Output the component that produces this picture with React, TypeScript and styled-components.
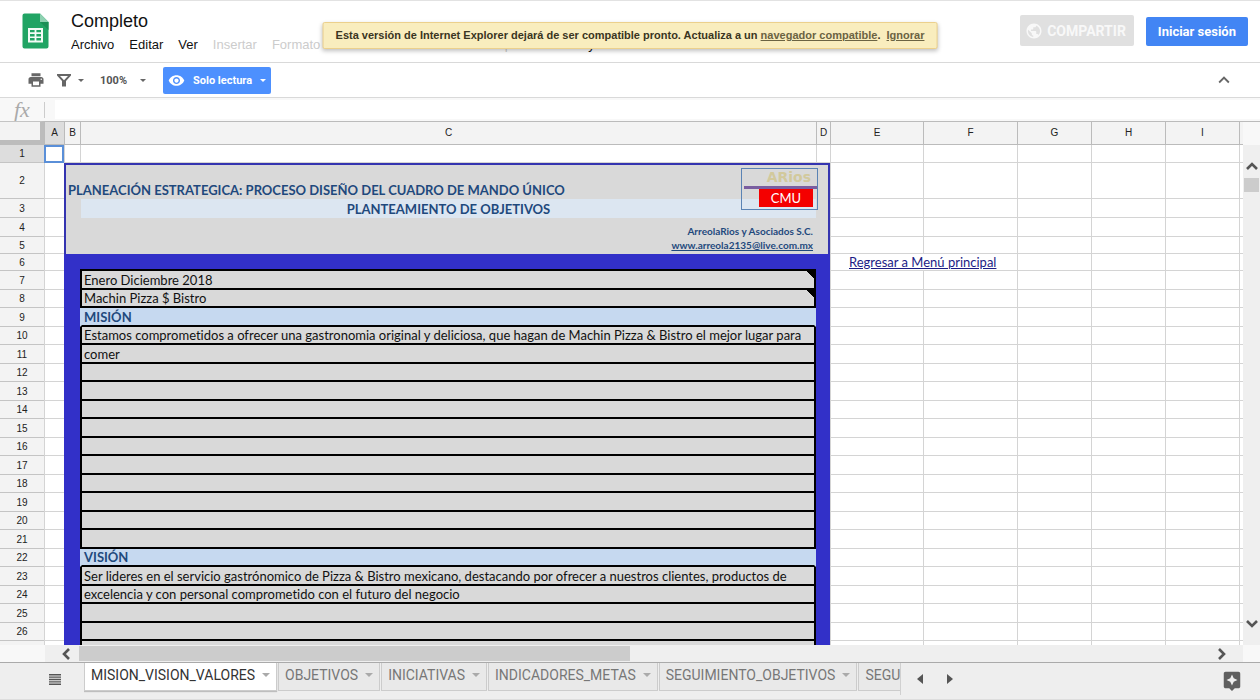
import React from "react";
import styled, { createGlobalStyle, css } from "styled-components";
import {
  MdAssistant,
  MdKeyboardArrowUp,
  MdPrint,
  MdPublic,
  MdVisibility,
} from "react-icons/md";

const arial = `"Liberation Sans", Arial, sans-serif`;
const roboto = `Roboto, "Liberation Sans", sans-serif`;
const calibri = `Lato, Carlito, Calibri, sans-serif`;

const GlobalStyle = createGlobalStyle`
  * { box-sizing: border-box; }
  body { margin: 0; background: #fff; font-family: ${arial}; color: #222; }
  button, select, input { font: inherit; color: inherit; margin: 0; border: 0; padding: 0; background: none; }
  svg { display: block; flex: none; }
`;

const Page = styled.div`
  display: flex;
  flex-direction: column;
  height: 100vh;
  overflow: hidden;
  border-top: 1px solid #e2e2e2;
`;

/* ---------- title area ---------- */

const Header = styled.header`
  position: relative;
  display: flex;
  align-items: flex-start;
  flex: none;
  height: 62px;
  padding: 0 12px 0 22px;
  border-bottom: 1px solid #d9d9d9;
`;

const LogoLink = styled.a`
  padding-top: 12px;
`;

const Titles = styled.div`
  flex: 1;
  min-width: 0;
  padding: 8px 0 0 22px;
`;

const DocTitle = styled.h1`
  margin: 0;
  font-size: 18px;
  line-height: 24px;
  font-weight: 400;
  color: #111;
`;

const MenuBar = styled.nav`
  display: flex;
  gap: 15px;
  margin-top: 3px;
  overflow: hidden;
`;

const MenuItem = styled.button`
  font-size: 13px;
  line-height: 18px;
  color: #111;
  &:disabled {
    color: #ccc;
  }
`;

const Actions = styled.div`
  display: flex;
  align-items: flex-start;
  gap: 12px;
  padding-top: 14px;
`;

const ShareButton = styled.button`
  display: flex;
  align-items: center;
  gap: 4px;
  height: 31px;
  padding: 0 8px 0 5px;
  border-radius: 2px;
  background: #e0e0e0;
  color: #f8f8f8;
  font: 700 14px ${roboto};
`;

const SignInButton = styled.button`
  height: 29px;
  margin-top: 2px;
  padding: 0 12px;
  border-radius: 2px;
  background: #4285f4;
  color: #fff;
  font: 700 13px ${roboto};
`;

const Notice = styled.div`
  position: absolute;
  top: 21px;
  left: 50%;
  transform: translateX(-50%);
  padding: 0 12px;
  border: 1px solid #ecd08c;
  border-radius: 2px;
  background: #f9edbe;
  box-shadow: 0 2px 4px rgba(0, 0, 0, 0.25);
  font-size: 11px;
  line-height: 25px;
  font-weight: 700;
  color: #3a3522;
  white-space: nowrap;
  a {
    color: #6b6342;
  }
`;

/* ---------- toolbar ---------- */

const Toolbar = styled.div`
  display: flex;
  align-items: center;
  flex: none;
  height: 35px;
  padding: 0 25px 0 27px;
  border-bottom: 1px solid #d9d9d9;
  color: #666;
`;

const ToolButton = styled.button`
  display: flex;
  align-items: center;
  gap: 7px;
  color: #666;
`;

const FilterButton = styled(ToolButton)`
  margin-left: 12px;
`;

const ZoomPicker = styled.label`
  display: flex;
  align-items: center;
  gap: 12px;
  margin: 0 17px 0 16px;
`;

const ZoomSelect = styled.select`
  appearance: none;
  width: 28px;
  font: 700 11px ${roboto};
  color: #555;
`;

const ReadOnlyButton = styled.button`
  display: flex;
  align-items: center;
  height: 27px;
  padding: 0 5px;
  border-radius: 2px;
  background: #4d90fe;
  color: #fff;
  font: 700 11px ${roboto};
  span {
    margin: 0 8px;
  }
`;

const CollapseButton = styled(ToolButton)`
  margin-left: auto;
`;

const Caret = styled.span`
  && {
    width: 0;
    height: 0;
    margin: 0;
    border: 3px solid transparent;
    border-top-color: currentColor;
    border-bottom: 0;
  }
`;

/* ---------- formula bar ---------- */

const FormulaBar = styled.label`
  display: flex;
  align-items: center;
  flex: none;
  height: 23px;
  background: #f8f8f8;
`;

const FxMark = styled.span`
  flex: none;
  width: 45px;
  padding-left: 14px;
  border-right: 1px solid #ccc;
  font: italic 22px/16px "Liberation Serif", serif;
  color: #aaa;
`;

const FormulaInput = styled.input`
  flex: 1;
  height: 19px;
  margin-left: 10px;
  background: #fff;
`;

/* ---------- sheet ---------- */

const SheetArea = styled.main`
  display: flex;
  flex: 1;
  min-height: 0;
`;

const Viewport = styled.div`
  flex: 1;
  min-width: 0;
  overflow: hidden;
`;

const Grid = styled.table`
  table-layout: fixed;
  width: 100%;
  border-collapse: separate;
  border-spacing: 0;
  th,
  td {
    padding: 0;
  }
`;

const Col = styled.col<{ $w?: number }>`
  width: ${(p) => (p.$w ? `${p.$w}px` : "auto")};
`;

const Row = styled.tr<{ $h: number }>`
  height: ${(p) => p.$h}px;
`;

const ColHead = styled.th<{ $active?: boolean }>`
  border: solid #bbb;
  border-width: 1px 0 1px 1px;
  background: ${(p) => (p.$active ? "#ddd" : "#f3f3f3")};
  font-size: 10px;
  line-height: 12px;
  font-weight: 400;
`;

const Corner = styled.th`
  border: solid #bcbcbc;
  border-width: 1px 4px 5px 0;
  border-top-color: #c4c4c4;
  background: #f3f3f3;
`;

const RowHead = styled.th<{ $active?: boolean }>`
  border-bottom: 1px solid #c4c4c4;
  background: ${(p) => (p.$active ? "#ddd" : "#f3f3f3")};
  font-size: 10px;
  line-height: 12px;
  font-weight: 400;
  && {
    padding-top: 1px;
  }
`;

const Cell = styled.td<{ $selected?: boolean }>`
  border: solid #d4d4d4;
  border-width: 0 0 1px 1px;
  background: #fff;
  font: 13px/16px ${calibri};
  font-variant-ligatures: none;
  white-space: nowrap;
  ${(p) =>
    p.$selected &&
    css`
      outline: 2px solid #5a8fd8;
      outline-offset: -2px;
    `}
`;

const FrameCell = styled.td`
  background: #3230c8;
`;

const FrameTopCell = styled(FrameCell)`
  border-bottom: 2px solid #000;
`;

const ContentCell = styled.td<{ $note?: boolean; $heading?: boolean }>`
  border: solid #000;
  border-width: 0 2px 2px 2px;
  background: #d9d9d9;
  font: 13px/16px ${calibri};
  font-variant-ligatures: none;
  color: #111;
  white-space: nowrap;
  && {
    padding-left: 2px;
  }
  ${(p) =>
    p.$note &&
    css`
      background: linear-gradient(225deg, #000 5px, #d9d9d9 5px);
    `}
  ${(p) =>
    p.$heading &&
    css`
      border-left-color: #c6d9f0;
      border-right-color: #c6d9f0;
      background: #c6d9f0;
      color: #1f497d;
      font-weight: 700;
    `}
`;

const SheetLink = styled.a`
  margin-left: 18px;
  color: #1c1c86;
`;

const BannerCell = styled.td`
  position: relative;
  vertical-align: top;
  border: solid #3434b0;
  border-width: 2px 2px 0 2px;
  background: #d9d9d9;
  color: #1f497d;
  font-family: ${calibri};
  font-weight: 700;
  white-space: nowrap;
`;

const BannerTitle = styled.div`
  height: 34px;
  padding: 16px 0 0 2px;
  font-size: 13px;
  line-height: 18px;
`;

const BannerSubtitle = styled.div`
  height: 19px;
  margin: 0 12px 0 15px;
  background: #dce6f1;
  font-size: 13px;
  line-height: 20px;
  text-align: center;
`;

const BannerContact = styled.div`
  display: flex;
  flex-direction: column;
  align-items: flex-end;
  padding: 6px 15px 0 0;
  font-size: 10px;
  line-height: 14px;
  a {
    color: inherit;
  }
`;

const CompanyMark = styled.div`
  position: absolute;
  top: 3px;
  right: 10px;
  width: 77px;
  height: 42px;
  border: 1px solid #5a83b4;
`;

const CompanyName = styled.div`
  padding-right: 6px;
  border-bottom: 3px solid #7a5ea0;
  margin-left: 2px;
  font: 700 14px/17px "DejaVu Sans", sans-serif;
  color: #d2c99c;
  text-align: right;
`;

const CompanyUnit = styled.div`
  width: 54px;
  margin-left: 17px;
  background: #f40000;
  color: #fff;
  font-size: 13px;
  line-height: 18px;
  font-weight: 400;
  text-align: center;
`;

/* ---------- scroll bars ---------- */

const VScroll = styled.div`
  display: flex;
  flex-direction: column;
  flex: none;
  width: 17px;
  background: #efefef;
  color: #555;
`;

const VScrollHead = styled.div`
  height: 24px;
  border-top: 1px solid #bbb;
  background: #f8f8f8;
`;

const ArrowButton = styled.button`
  display: flex;
  align-items: center;
  justify-content: center;
  color: #555;
`;

const UpArrow = styled(ArrowButton)`
  height: 33px;
  padding-top: 8px;
`;

const DownArrow = styled(ArrowButton)`
  height: 42px;
  margin-top: auto;
`;

const VThumb = styled.div`
  height: 14px;
  margin: 0 1px;
  background: #ccc;
`;

const HScroll = styled.div`
  display: flex;
  flex: none;
  height: 17px;
  background: #f8f8f8;
`;

const HScrollCorner = styled.div<{ $w: number }>`
  flex: none;
  width: ${(p) => p.$w}px;
`;

const HTrack = styled.div`
  display: flex;
  flex: 1;
  background: #efefef;
`;

const HThumb = styled.div`
  width: 46%;
  height: 15px;
  margin-top: 1px;
  background: #ccc;
`;

const LeftArrow = styled(ArrowButton)`
  width: 34px;
  padding-left: 8px;
`;

const RightArrow = styled(ArrowButton)`
  width: 43px;
  margin-left: auto;
`;

/* ---------- sheet tabs ---------- */

const TabBar = styled.footer`
  display: flex;
  align-items: flex-start;
  flex: none;
  height: 38px;
  border-top: 1px solid #aaa;
  border-bottom: 1px solid #ddd;
  background: #eee;
`;

const AllSheetsButton = styled.button`
  padding: 11px 23px 0 49px;
`;

const Tabs = styled.div`
  display: flex;
  gap: 1px;
  flex: 0 1 817px;
  min-width: 0;
  overflow: hidden;
  height: 32px;
  border-right: 1px solid #d0d0d0;
`;

const Tab = styled.button<{ $active?: boolean }>`
  display: flex;
  align-items: center;
  flex: none;
  gap: 7px;
  height: 28px;
  padding: 0 6px 4px 6px;
  border: 1px solid #ccc;
  border-top: 0;
  background: #e9e9e9;
  color: #777;
  font: 14px ${roboto};
  ${(p) =>
    p.$active &&
    css`
      background: #fff;
      color: #333;
      box-shadow: 0 1px 1px rgba(0, 0, 0, 0.2);
    `}
`;

const TabCaret = styled.span`
  border: 4px solid transparent;
  border-top-color: #aaa;
  border-bottom: 0;
`;

const TabNav = styled.div`
  display: flex;
  gap: 24px;
  padding: 11px 0 0 16px;
`;

const ExploreButton = styled.button`
  margin-left: auto;
  padding: 7px 17px 0 0;
  color: #5f5f5f;
`;

const SheetsLogo = () => (
  <svg width="27" height="36" viewBox="0 0 27 36" aria-hidden="true">
    <path d="M2.500 0.500H18L26.500 9V33.500A2 2 0 0 1 24.500 35.500H2.500A2 2 0 0 1 .5 33.500V2.500A2 2 0 0 1 2.500 .5Z" fill="#21a464" />
    <path d="M18 .5L26.500 9H18Z" fill="#8ed1b1" />
    <path d="M18 9H26.500V17Z" fill="#1b8f56" />
    <path fillRule="evenodd" fill="#f3fbf6" d="M6 15H21V29.500H6ZM8 17V19.300H12.600V17ZM14.400 17V19.300H19V17ZM8 21V23.400H12.600V21ZM14.400 21V23.400H19V21ZM8 25.100V27.500H12.600V25.100ZM14.400 25.100V27.500H19V25.100Z" />
  </svg>
);

const FunnelIcon = () => (
  <svg width="14" height="13" viewBox="0 0 14 13" aria-hidden="true">
    <path fillRule="evenodd" fill="currentColor" d="M0 0H14V1.500L9 7V12.500H5V7L0 1.500ZM3 2L7 6.200L11 2Z" />
  </svg>
);

const ChevronIcon = ({ turn }: { turn: number }) => (
  <svg width="12" height="12" viewBox="0 0 12 12" aria-hidden="true">
    <path d="M1 9L6 4L11 9" transform={`rotate(${turn} 6 6)`} fill="none" stroke="currentColor" strokeWidth="2.600" />
  </svg>
);

const TriangleIcon = ({ right }: { right?: boolean }) => (
  <svg width="6" height="10" viewBox="0 0 6 10" aria-hidden="true">
    <path d={right ? "M0 0L6 5L0 10Z" : "M6 0L0 5L6 10Z"} fill="#555" />
  </svg>
);

const SheetListIcon = () => (
  <svg width="12" height="11" viewBox="0 0 12 11" aria-hidden="true">
    <path d="M0 .75H12M0 3.100H12M0 5.500H12M0 7.900H12M0 10.250H12" stroke="#555" strokeWidth="1.400" />
  </svg>
);

const columns = [
  { name: "A", width: 20 },
  { name: "B", width: 16 },
  { name: "C", width: 736 },
  { name: "D", width: 14 },
  { name: "E", width: 93 },
  { name: "F", width: 94 },
  { name: "G", width: 74 },
  { name: "H", width: 74 },
  { name: "I", width: 74 },
  { name: "", width: 0 },
];

const menus = [
  { name: "Archivo" },
  { name: "Editar" },
  { name: "Ver" },
  { name: "Insertar", disabled: true },
  { name: "Formato", disabled: true },
  { name: "Datos" },
  { name: "Herramientas" },
  { name: "Complementos", disabled: true },
  { name: "Ayuda" },
];

const content: Record<number, string> = {
  7: "Enero Diciembre 2018",
  8: "Machin Pizza $ Bistro",
  9: "MISIÓN",
  10: "Estamos comprometidos a ofrecer una gastronomia original y deliciosa, que hagan de Machin Pizza & Bistro el mejor lugar para",
  11: "comer",
  22: "VISIÓN",
  23: "Ser lideres en el servicio gastrónomico de Pizza & Bistro mexicano, destacando por ofrecer a nuestros clientes, productos de",
  24: "excelencia y con personal comprometido con el futuro del negocio",
};

const tabs = [
  "MISION_VISION_VALORES",
  "OBJETIVOS",
  "INICIATIVAS",
  "INDICADORES_METAS",
  "SEGUIMIENTO_OBJETIVOS",
  "SEGUIMIENTO",
];

const topHeights: Record<number, number> = { 1: 18, 2: 36, 3: 19, 4: 19, 5: 17, 6: 17 };
const rowHeight = (n: number) => topHeights[n] ?? (n % 2 ? 19 : 18);

const Blanks = ({ count }: { count: number }) => (
  <>
    {Array.from({ length: count }, (_, i) => (
      <Cell key={i} />
    ))}
  </>
);

const SheetRow = ({ n }: { n: number }) => (
  <Row $h={rowHeight(n)}>
    <RowHead scope="row" $active={n === 1}>{n}</RowHead>
    <Cell $selected={n === 1} />
    {n === 1 && <Blanks count={3} />}
    {n === 2 && (
      <BannerCell colSpan={3} rowSpan={4}>
        <BannerTitle>PLANEACIÓN ESTRATEGICA: PROCESO DISEÑO DEL CUADRO DE MANDO ÚNICO</BannerTitle>
        <BannerSubtitle>PLANTEAMIENTO DE OBJETIVOS</BannerSubtitle>
        <BannerContact>
          <span>ArreolaRios y Asociados S.C.</span>
          <a href="mailto:www.arreola2135@live.com.mx">www.arreola2135@live.com.mx</a>
        </BannerContact>
        <CompanyMark>
          <CompanyName>ARios</CompanyName>
          <CompanyUnit>CMU</CompanyUnit>
        </CompanyMark>
      </BannerCell>
    )}
    {n >= 6 && (
      <>
        <FrameCell />
        {n === 6 ? (
          <FrameTopCell />
        ) : (
          <ContentCell $note={n === 7 || n === 8} $heading={n === 9 || n === 22}>
            {content[n]}
          </ContentCell>
        )}
        <FrameCell />
      </>
    )}
    {n === 6 ? (
      <>
        <Cell colSpan={2}>
          <SheetLink href="#menu">Regresar a Menú principal</SheetLink>
        </Cell>
        <Blanks count={4} />
      </>
    ) : (
      <Blanks count={6} />
    )}
  </Row>
);

export default function App() {
  return (
    <Page>
      <GlobalStyle />
      <Header>
        <LogoLink href="#inicio" aria-label="Hojas de cálculo">
          <SheetsLogo />
        </LogoLink>
        <Titles>
          <DocTitle>Completo</DocTitle>
          <MenuBar>
            {menus.map((m) => (
              <MenuItem key={m.name} disabled={m.disabled}>{m.name}</MenuItem>
            ))}
          </MenuBar>
        </Titles>
        <Actions>
          <ShareButton>
            <MdPublic size={18} />
            COMPARTIR
          </ShareButton>
          <SignInButton>Iniciar sesión</SignInButton>
        </Actions>
        <Notice role="status">
          Esta versión de Internet Explorer dejará de ser compatible pronto. Actualiza a un{" "}
          <a href="#navegador">navegador compatible</a>.&nbsp; <a href="#ignorar">Ignorar</a>
        </Notice>
      </Header>

      <Toolbar>
        <ToolButton aria-label="Imprimir">
          <MdPrint size={18} />
        </ToolButton>
        <FilterButton aria-label="Filtrar">
          <FunnelIcon />
          <Caret />
        </FilterButton>
        <ZoomPicker>
          <ZoomSelect aria-label="Zoom">
            <option>100%</option>
          </ZoomSelect>
          <Caret />
        </ZoomPicker>
        <ReadOnlyButton>
          <MdVisibility size={17} />
          <span>Solo lectura</span>
          <Caret />
        </ReadOnlyButton>
        <CollapseButton aria-label="Ocultar menús">
          <MdKeyboardArrowUp size={22} />
        </CollapseButton>
      </Toolbar>

      <FormulaBar>
        <FxMark>fx</FxMark>
        <FormulaInput readOnly aria-label="Fórmula" />
      </FormulaBar>

      <SheetArea>
        <Viewport>
          <Grid>
            <colgroup>
              <Col $w={44} />
              {columns.map((c) => (
                <Col key={c.name} $w={c.width} />
              ))}
            </colgroup>
            <thead>
              <Row $h={24}>
                <Corner />
                {columns.map((c) => (
                  <ColHead key={c.name} scope="col" $active={c.name === "A"}>{c.name}</ColHead>
                ))}
              </Row>
            </thead>
            <tbody>
              {Array.from({ length: 27 }, (_, i) => (
                <SheetRow key={i} n={i + 1} />
              ))}
            </tbody>
          </Grid>
        </Viewport>
        <VScroll>
          <VScrollHead />
          <UpArrow aria-label="Subir">
            <ChevronIcon turn={0} />
          </UpArrow>
          <VThumb />
          <DownArrow aria-label="Bajar">
            <ChevronIcon turn={180} />
          </DownArrow>
        </VScroll>
      </SheetArea>

      <HScroll>
        <HScrollCorner $w={45} />
        <HTrack>
          <LeftArrow aria-label="Izquierda">
            <ChevronIcon turn={270} />
          </LeftArrow>
          <HThumb />
          <RightArrow aria-label="Derecha">
            <ChevronIcon turn={90} />
          </RightArrow>
        </HTrack>
        <HScrollCorner $w={17} />
      </HScroll>

      <TabBar>
        <AllSheetsButton aria-label="Todas las hojas">
          <SheetListIcon />
        </AllSheetsButton>
        <Tabs>
          {tabs.map((t, i) => (
            <Tab key={t} $active={i === 0}>
              {t}
              <TabCaret />
            </Tab>
          ))}
        </Tabs>
        <TabNav>
          <button aria-label="Anterior">
            <TriangleIcon />
          </button>
          <button aria-label="Siguiente">
            <TriangleIcon right />
          </button>
        </TabNav>
        <ExploreButton aria-label="Explorar">
          <MdAssistant size={22} />
        </ExploreButton>
      </TabBar>
    </Page>
  );
}
